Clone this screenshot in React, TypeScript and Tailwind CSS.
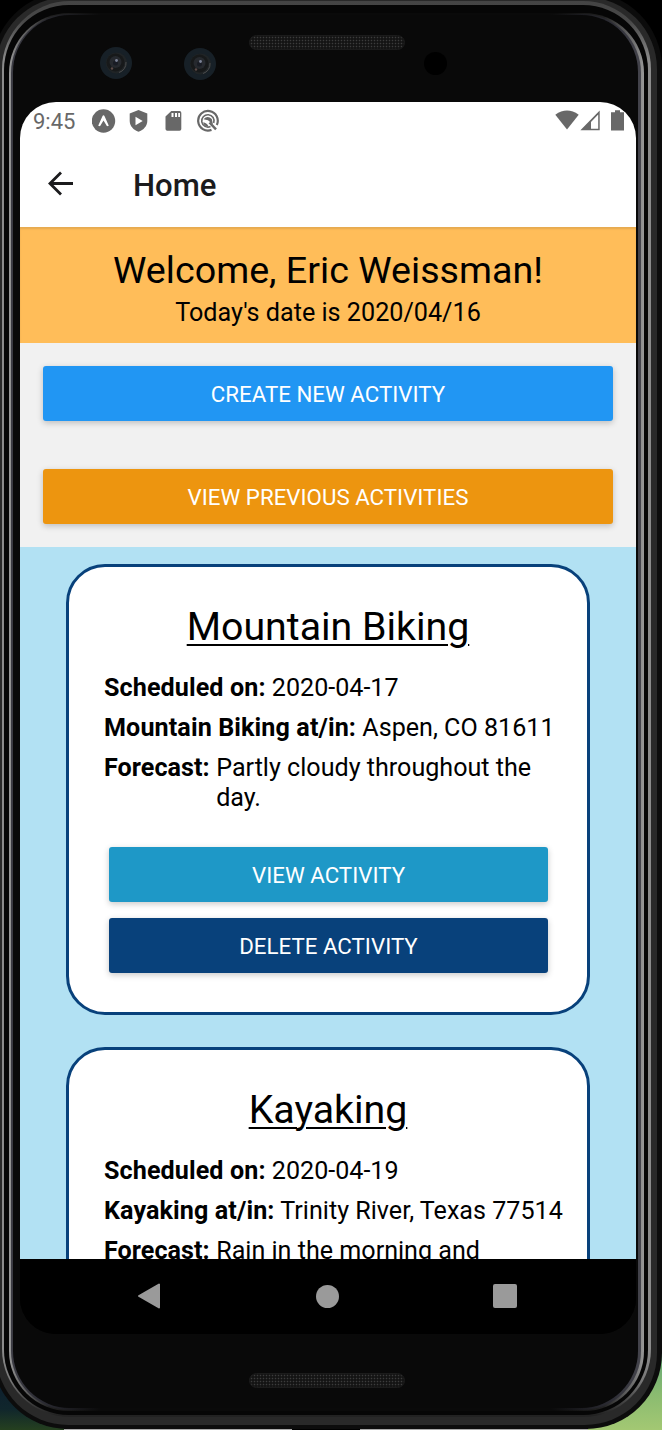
import type { ReactNode } from "react";

type Activity = {
  name: string;
  date: string;
  place: string;
  forecast: string;
};

const activities: Activity[] = [
  {
    name: "Mountain Biking",
    date: "2020-04-17",
    place: "Aspen, CO 81611",
    forecast: "Partly cloudy throughout the day.",
  },
  {
    name: "Kayaking",
    date: "2020-04-19",
    place: "Trinity River, Texas 77514",
    forecast: "Rain in the morning and",
  },
];

function StatusBar() {
  return (
    <div className="flex h-[38px] shrink-0 items-center bg-white pl-[13px] pr-[12px] text-[#686868]">
      <span className="w-[59px] pt-px text-[22px] leading-none">9:45</span>
      <svg className="h-6 w-6" viewBox="0 0 24 24">
        <circle cx="11.5" cy="12" r="11.7" fill="currentColor" />
        <path
          d="M6.2 16.8 10.3 7.4Q11.5 5.2 12.7 7.4L16.8 16.8L15 17.3L11.5 11.5L8 17.3Z"
          fill="#fff"
        />
      </svg>
      <svg className="ml-[13px] h-6 w-[19px]" viewBox="0 0 19 24">
        <path d="M9.5 1 18.3 4.5V12C18.3 17 14.5 21 9.5 22.8C4.500 21 .7 17 .7 12V4.500Z" fill="currentColor" />
        <path d="M6.500 7.700V16.300L13.700 12Z" fill="#fff" />
      </svg>
      <svg className="ml-[17px] h-6 w-[17px]" viewBox="0 0 17 24">
        <path d="M6.300 2H14.500Q16.300 2 16.300 3.800V20Q16.300 21.800 14.500 21.800H2.300Q.5 21.800 .5 20V7.600Z" fill="currentColor" />
        <path d="M6.500 4h2v4h-2zM10 4h2v4h-2zM13.200 4h1.800v4h-1.800z" fill="#fff" />
      </svg>
      <svg className="ml-[14px] h-6 w-6" viewBox="0 0 24 24" fill="none" stroke="currentColor">
        <path d="M15.500 20.900A9.800 9.800 0 1 1 20.800 16" strokeWidth="2.200" />
        <path d="M14.500 17.500A6.200 6.200 0 1 1 17.700 14" strokeWidth="1.600" />
        <path d="M7.500 10.200Q11.500 5.800 15.800 10L17 15.500L12 11.200Z" fill="currentColor" stroke="none" />
        <path d="M7 13.500Q10 13 12.500 17.200Q9 18.200 7 13.500Z" fill="currentColor" stroke="none" />
        <path d="M13.500 13.500 20 20.300" strokeWidth="2.500" />
      </svg>
      <svg className="ml-auto h-6 w-6" viewBox="0 0 24 24">
        <path d="M.3 5.700Q12 -2.500 23.700 5.700L12 20.500Z" fill="currentColor" />
      </svg>
      <svg className="ml-px h-6 w-5" viewBox="0 0 20 24">
        <path d="M.4 21.200 19.700 1.500V21.200ZM11 19.700H18.200V5.500L11 13Z" fill="currentColor" fillRule="evenodd" />
      </svg>
      <svg className="ml-[11px] h-6 w-[13px]" viewBox="0 0 13 24">
        <path d="M4 1.300H9V3.200H13V21.500H0V3.200H4Z" fill="currentColor" />
      </svg>
    </div>
  );
}

function Button({ color, children }: { color: string; children: ReactNode }) {
  return (
    <button
      className={`flex h-[55px] w-full shrink-0 items-center justify-center rounded-[3px] pt-px text-[22.300px] leading-[26px] text-white shadow-[0_2px_6px_rgba(0,0,0,0.220)] ${color}`}
    >
      {children}
    </button>
  );
}

function ActivityCard({ activity }: { activity: Activity }) {
  return (
    <article className="flex h-[451px] shrink-0 flex-col rounded-[39px] border-[3px] border-[#08417b] bg-white pl-[35px] pr-[18px] pt-[37px]">
      <h2 className="pr-[17px] text-center text-[39.300px] leading-[46px] underline decoration-[2px] underline-offset-[4px]">
        {activity.name}
      </h2>
      <div className="mt-[23px] flex flex-col gap-[10px] whitespace-nowrap text-[25.120px] leading-[30px]">
        <p>
          <b className="tracking-[0.1px]">Scheduled on:</b> {activity.date}
        </p>
        <p>
          <b className="tracking-[0.11px]">{activity.name} at/in:</b> {activity.place}
        </p>
        <div className="flex gap-[6.500px]">
          <b className="tracking-[0.05px]">Forecast:</b>
          <p className="w-[330px] whitespace-normal">{activity.forecast}</p>
        </div>
      </div>
      <div className="ml-[5px] mt-[34px] flex w-[439px] flex-col gap-4">
        <Button color="bg-[#1e98c7]">VIEW ACTIVITY</Button>
        <Button color="bg-[#08417b]">DELETE ACTIVITY</Button>
      </div>
    </article>
  );
}

function NavigationBar() {
  return (
    <nav className="flex h-[75px] shrink-0 items-center justify-between bg-black pb-px pl-[117px] pr-[119px]">
      <svg className="h-[26px] w-6" viewBox="0 0 24 26">
        <path d="M2 13 22 1.500V24.500Z" fill="#9a9a9a" stroke="#9a9a9a" strokeWidth="2" strokeLinejoin="round" />
      </svg>
      <span className="ml-px h-[23px] w-[23px] rounded-full bg-[#9a9a9a]" />
      <span className="h-6 w-6 rounded-[2px] bg-[#9a9a9a]" />
    </nav>
  );
}

function Screen() {
  return (
    <main className="flex h-[1232px] w-[616px] shrink-0 flex-col overflow-hidden rounded-[36px] bg-black text-black">
      <StatusBar />
      <header className="flex h-[87px] shrink-0 items-center bg-white pl-[27px] text-[#1b1b1d]">
        <svg className="h-[26px] w-[26px]" viewBox="0 0 26 26" fill="none" stroke="currentColor" strokeWidth="2.800">
          <path d="M26 12.500H3M14 1.500 3 12.500 14 23.500" />
        </svg>
        <h1 className="ml-[60px] pt-[5px] text-[31.100px] font-medium">Home</h1>
      </header>
      <section className="flex h-[116px] shrink-0 flex-col items-center bg-[#ffbd59] pt-[21px] shadow-[inset_0_2px_2px_rgba(0,0,0,0.100)]">
        <p className="text-[37.650px] leading-[44px]">Welcome, Eric Weissman!</p>
        <p className="mt-[6px] text-[25.180px] leading-[30px]">Today's date is 2020/04/16</p>
      </section>
      <section className="flex h-[204px] shrink-0 flex-col gap-12 bg-[#f1f1f1] px-[23px] pt-[23px]">
        <Button color="bg-[#2196f3]">CREATE NEW ACTIVITY</Button>
        <Button color="bg-[#ed950f]">VIEW PREVIOUS ACTIVITIES</Button>
      </section>
      <section className="flex min-h-0 flex-1 flex-col gap-8 overflow-hidden bg-[#b2e1f3] px-[46px] pt-[16.500px]">
        {activities.map((activity) => (
          <ActivityCard key={activity.name} activity={activity} />
        ))}
      </section>
      <NavigationBar />
    </main>
  );
}

function Camera() {
  return (
    <svg className="h-8 w-8" viewBox="0 0 32 32">
      <circle cx="16" cy="16" r="16" fill="#172027" />
      <circle cx="16.500" cy="16" r="10.500" fill="#202426" />
      <circle cx="15.500" cy="15.500" r="9" fill="#17191a" />
      <path d="M19 25.500A10 10 0 0 0 26 15" stroke="#4a4c4e" strokeWidth="1" fill="none" />
      <circle cx="15.500" cy="15" r="6" fill="#26292e" />
      <circle cx="15.500" cy="16" r="2.500" fill="#191c24" />
      <circle cx="16.500" cy="13.500" r="1.400" fill="#7b8296" />
      <circle cx="12" cy="21.500" r="1.200" fill="#5c4a48" />
    </svg>
  );
}

function Speaker() {
  return (
    <div className="h-[15px] w-[156px] rounded-full border border-[#1b1b1b] bg-[#141414] bg-[radial-gradient(circle,#3c3c3c_0.6px,transparent_1.100px)] bg-[size:3px_3px]" />
  );
}

export default function App() {
  return (
    <div className="relative h-[1430px] w-[662px] overflow-hidden bg-black font-[Roboto,sans-serif]">
      <div className="absolute bottom-0 left-0 h-[70px] w-[64px] bg-[linear-gradient(to_bottom,#0b1830,#10262c_70%,#25401f)]" />
      <div className="absolute bottom-0 right-0 h-[80px] w-[74px] bg-[linear-gradient(to_bottom,#5fa577,#8abb70_55%,#a3c873)]" />
      <div className="absolute bottom-0 left-[64px] flex h-px w-[524px] justify-between">
        <span className="w-[228px] bg-[#a8a8a8]" />
        <span className="w-[228px] bg-[#a8a8a8]" />
      </div>
      <div className="relative -ml-2 -mt-2 h-[1437px] w-[670px] rounded-[76px] bg-[#0c0c0c] pb-1 pl-1 pr-[5px] pt-[5px]">
        <div className="h-full rounded-[72px] bg-[#292929] pb-2 pl-[6px] pr-[6px] pt-1">
          <div className="h-full rounded-[68px] bg-[linear-gradient(to_bottom,#444_0px,#484848_20px,#8b8b8b_60px,#8b8b8b_1350px,#777_1380px,#222_1414px)] pb-[2px] pl-[2px] pr-[3px] pt-1">
            <div className="h-full rounded-[65px] bg-[#060606] pb-1 pl-[5px] pr-1 pt-2">
              <div className="h-full rounded-[60px] bg-[linear-gradient(to_right,#999_0px,#777_8px,#222_40px,#0a0a0a_90px,#0a0a0a_545px,#222_595px,#777_627px,#999_635px)] pb-px pl-[2px] pr-[3px] pt-px">
                <div className="h-full rounded-[59px] bg-[linear-gradient(to_right,#3c3c44_0px,#2c2c34_30px,#0a0a0a_90px,#0a0a0a_540px,#2c2c34_600px,#44444c_630px)] pb-[2px] pl-[2px] pr-[3px] pt-px">
                  <div className="flex h-full flex-col rounded-[57px] bg-[#090909] pl-[7px] pr-[2px]">
                    <div className="flex h-[87px] shrink-0 items-start pl-20 pt-8">
                      <Camera />
                      <div className="ml-[52px] mt-px">
                        <Camera />
                      </div>
                      <div className="-mt-3 ml-[33px]">
                        <Speaker />
                      </div>
                      <span className="ml-[19px] mt-[5px] h-[23px] w-[23px] rounded-full bg-black" />
                    </div>
                    <Screen />
                    <div className="pl-[229px] pt-[39px]">
                      <Speaker />
                    </div>
                  </div>
                </div>
              </div>
            </div>
          </div>
        </div>
      </div>
    </div>
  );
}
